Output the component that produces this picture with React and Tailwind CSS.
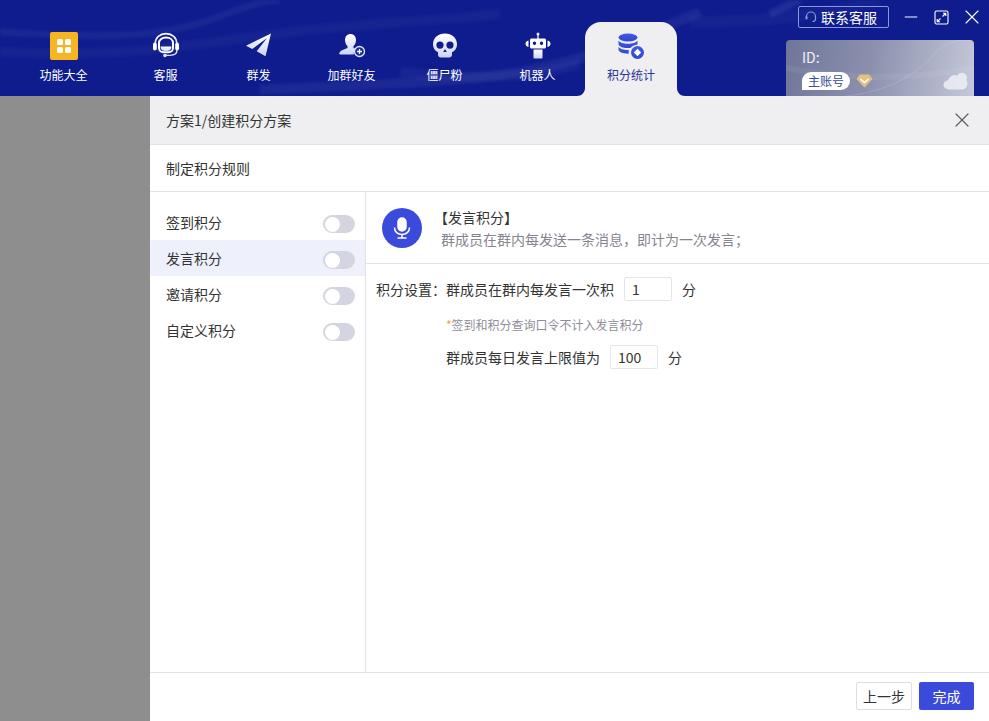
import { Minus, X } from "lucide-react";

const FONT = "font-['Noto_Sans_CJK_SC','Noto_Sans',sans-serif]";

function IconDefs() {
  return (
    <svg className="absolute h-0 w-0">
      <defs>
        <linearGradient id="navWhite" x1="0" y1="0" x2="0" y2="1">
          <stop offset="0" stopColor="#ffffff" />
          <stop offset="1" stopColor="#ccd4fb" />
        </linearGradient>
        <linearGradient id="navBlue" x1="0" y1="0" x2="0" y2="1">
          <stop offset="0" stopColor="#4258e6" />
          <stop offset="1" stopColor="#3345d4" />
        </linearGradient>
      </defs>
    </svg>
  );
}

const GridIcon = () => (
  <div className="grid h-7 w-7 grid-cols-2 content-center justify-center gap-[2px] rounded-[2px] bg-[#f7b51f] px-[7px]">
    <span className="h-[6px] w-[6px] rounded-[1.5px] bg-white" />
    <span className="h-[6px] w-[6px] rounded-[1.5px] bg-white" />
    <span className="h-[6px] w-[6px] rounded-[1.5px] bg-white" />
    <span className="h-[6px] w-[6px] rounded-[1.5px] bg-white" />
  </div>
);

const HeadsetIcon = () => (
  <svg width="28" height="28" viewBox="0 0 28 28">
    <path d="M3.2 14V11.5C3.2 5.5 8 1.6 14 1.6s10.800 3.900 10.800 9.900V14" fill="none" stroke="url(#navWhite)" strokeWidth="1.6" />
    <path d="M7 11c0-3 2.600-5.400 7-5.400s7 2.400 7 5.400v5c0 2.400-2 4.200-4.500 4.200h-5C9 20.200 7 18.400 7 16z" fill="none" stroke="#fff" strokeWidth="2" />
    <path d="M8.500 14.500h11c0 3-2 4.500-4.500 4.500h-2c-2.500 0-4.500-1.500-4.500-4.500z" fill="url(#navWhite)" />
    <rect x="1" y="10.500" width="3.800" height="8" rx="1.900" fill="#fff" />
    <rect x="23.200" y="10.500" width="3.800" height="8" rx="1.900" fill="#fff" />
    <path d="M25 18c0 3.500-3 5.300-7 5.300h-4" fill="none" stroke="#dfe4fd" strokeWidth="1.300" />
    <circle cx="13" cy="23.500" r="1.800" fill="#dfe4fd" />
  </svg>
);

const PlaneIcon = () => (
  <svg width="28" height="28" viewBox="0 0 28 28">
    <path d="M26 1.500 1 13.700l6.300 3.300L22 6 11.700 19.300l8.800 5z" fill="url(#navWhite)" />
  </svg>
);

const AddFriendIcon = () => (
  <svg width="28" height="28" viewBox="0 0 28 28">
    <path d="M12.500 2c3.400 0 5.500 2.600 5.500 6 0 2.500-1 4.800-2.500 6v2c1 .4 1.800.8 2.500 1.100-1.600 1.300-2.300 3-2.300 5.400H2.500c-1 0-1.500-.6-1.200-1.500.6-2 4-3.500 8.200-5v-2C8 12.800 7 10.500 7 8c0-3.400 2.100-6 5.500-6z" fill="url(#navWhite)" />
    <circle cx="21.500" cy="19.500" r="5" fill="#1a2a94" stroke="#e3e7fd" strokeWidth="1.300" />
    <path d="M19 19.500h5M21.500 17v5" stroke="#fff" strokeWidth="1.300" />
  </svg>
);

const SkullIcon = () => (
  <svg width="28" height="28" viewBox="0 0 28 28">
    <path fillRule="evenodd" d="M14 1.500c6.900 0 12 4.500 12 10.700 0 3.800-2 6.600-5 8.100v2.200c0 2-1.300 3-3 3h-8c-1.700 0-3-1-3-3v-2.200c-3-1.500-5-4.300-5-8.100C2 6 7.100 1.500 14 1.500zM9 9.500a3.600 3.600 0 1 0 0 7.200 3.600 3.600 0 0 0 0-7.200zm10 0a3.600 3.600 0 1 0 0 7.200 3.600 3.600 0 0 0 0-7.200zM14 17l-1.800 3h3.600z" fill="url(#navWhite)" />
  </svg>
);

const RobotIcon = () => (
  <svg width="28" height="28" viewBox="0 0 28 28">
    <circle cx="14" cy="2" r="1.500" fill="#dfe4fd" />
    <rect x="13.400" y="2" width="1.200" height="5" fill="#fff" />
    <path fillRule="evenodd" d="M7.500 6.500h13c.8 0 1.500.7 1.500 1.500v7c0 .8-.7 1.500-1.500 1.500h-13C6.700 16.500 6 15.800 6 15V8c0-.8.700-1.500 1.500-1.500zM10.500 9.500a1.700 1.700 0 1 0 0 3.400 1.700 1.700 0 0 0 0-3.400zm7 0a1.700 1.700 0 1 0 0 3.400 1.700 1.700 0 0 0 0-3.400z" fill="#fff" />
    <path d="M9.500 17.500h9v8c0 .6-.4 1-1 1h-7c-.6 0-1-.4-1-1z" fill="url(#navWhite)" />
    <path d="M4.500 8.500v6.500C2.500 14.500 1.500 13.200 1.500 11.700S2.500 9 4.500 8.500zM23.500 8.500v6.500c2-.5 3-1.800 3-3.300s-1-2.700-3-3.200z" fill="#fff" />
  </svg>
);

const CoinsIcon = () => (
  <svg width="28" height="28" viewBox="0 0 28 28">
    <ellipse cx="11" cy="5.500" rx="9.500" ry="4" fill="url(#navBlue)" />
    <path d="M1.500 8.500c1.200 2 5 3.300 9.500 3.300s8.300-1.300 9.500-3.300v3.200c0 .4-.1.700-.3 1-2.700.1-5.300 1.300-6.800 3.200-.8.100-1.600.2-2.400.2-5.200 0-9.500-1.900-9.500-4.200z" fill="url(#navBlue)" />
    <path d="M1.500 14.800c1.200 2 5 3.300 9.500 3.300h1c-.3.900-.4 1.800-.4 2.700v1c-.2 0-.4 0-.6 0-5.200 0-9.500-1.900-9.500-4.200z" fill="url(#navBlue)" />
    <circle cx="20.500" cy="20.500" r="6.500" fill="url(#navBlue)" />
    <path d="M20.500 16.800l3.700 3.700-3.700 3.700-3.700-3.700z" fill="#fff" />
  </svg>
);

const tabs = [
  { label: "功能大全", icon: GridIcon },
  { label: "客服", icon: HeadsetIcon },
  { label: "群发", icon: PlaneIcon },
  { label: "加群好友", icon: AddFriendIcon },
  { label: "僵尸粉", icon: SkullIcon },
  { label: "机器人", icon: RobotIcon },
];

const rules = ["签到积分", "发言积分", "邀请积分", "自定义积分"];

function HeaderWaves() {
  return (
    <svg className="pointer-events-none absolute inset-0 h-full w-full blur-[1.5px]" viewBox="0 0 989 96" fill="none" preserveAspectRatio="none">
      <path d="M0 32c110 6 160 6 215-14 45-16 50-18 65-18" stroke="#fff" strokeOpacity=".05" strokeWidth="7" />
      <path d="M0 52c130 6 195-8 290-20 90-10 130-10 210-18" stroke="#fff" strokeOpacity=".035" strokeWidth="10" />
      <path d="M260 90c60-4 190-6 260-18 60-10 110-30 180-60" stroke="#fff" strokeOpacity=".06" strokeWidth="10" />
      <path d="M400 72c60 6 130 8 180-8" stroke="#fff" strokeOpacity=".04" strokeWidth="10" />
      <path d="M690 22c60 0 120-4 190-22" stroke="#fff" strokeOpacity=".03" strokeWidth="12" />
      <path d="M770 14 800 0" stroke="#fff" strokeOpacity=".08" strokeWidth="8" />
    </svg>
  );
}

function NavTab({ label, icon: Icon, className = "" }) {
  return (
    <div className={`flex w-[93px] flex-col items-center pt-8 ${className}`}>
      <div className="flex h-7 w-7 items-center justify-center">
        <Icon />
      </div>
      <span className="mt-[6px] text-xs leading-[18px] text-white">{label}</span>
    </div>
  );
}

function ActiveTab() {
  return (
    <div className="relative ml-[1px] mt-[22px] flex w-[92px] flex-col items-center rounded-t-[16px] bg-[#efeff2] pt-[10px]">
      <svg className="absolute bottom-0 left-[-8px]" width="8" height="8" viewBox="0 0 8 8">
        <path d="M8 0v8H0c4.500 0 8-3.500 8-8z" fill="#efeff2" />
      </svg>
      <svg className="absolute bottom-0 right-[-8px]" width="8" height="8" viewBox="0 0 8 8">
        <path d="M0 0v8h8C3.500 8 0 4.500 0 0z" fill="#efeff2" />
      </svg>
      <CoinsIcon />
      <span className="mt-[6px] text-xs leading-[18px] text-[#2a3596]">积分统计</span>
    </div>
  );
}

function AccountCard() {
  return (
    <div className="relative mt-3 h-14 w-[188px] overflow-hidden rounded-t-[4px] bg-[linear-gradient(100deg,#6f7699_0%,#8b90ad_45%,#c6c9da_100%)] pl-4 pt-[7px]">
      <svg className="absolute inset-0 h-full w-full" viewBox="0 0 188 56" fill="none">
        <path d="M60 56c40-4 70-20 90-44 12-12 24-12 38-12" stroke="#fff" strokeOpacity=".15" />
        <path d="M0 28c60 10 110 14 188 0" stroke="#fff" strokeOpacity=".06" strokeWidth="6" />
      </svg>
      <div className="relative text-sm leading-5 text-white/90">ID:</div>
      <div className="relative mt-[5px] flex items-center">
        <span className="flex h-[18px] w-12 items-center justify-center rounded-[9px] rounded-bl-none bg-white text-xs text-[#3c4a9c]">主账号</span>
        <svg className="ml-[6px]" width="17" height="14" viewBox="0 0 17 14">
          <path d="M4 .500h9L16.500 5 8.500 13.500.500 5z" fill="#e6c080" />
          <path d="M4.500 5 8.500 8.500 12.500 5" fill="none" stroke="#fff" strokeWidth="1.600" />
        </svg>
      </div>
      <svg className="absolute bottom-[6px] right-[6px]" width="25" height="18" viewBox="0 0 25 18">
        <path d="M6 17.500c-3 0-5.500-2-5.500-4.700 0-2.500 2-4.400 4.500-4.600C6 5 8.500 3 11.500 3c1 0 2 .2 2.800.7C15.200 1.800 17 .800 19 .800c2.800 0 5 2.300 5 4.800 0 1-.3 1.700-.7 2.400.7.900 1.200 2 1.200 3.200 0 3.300-2.500 6.300-5.500 6.300z" fill="#fff" fillOpacity=".65" />
      </svg>
    </div>
  );
}

function TopBar() {
  return (
    <header className="relative flex h-24 shrink-0 bg-[#0e1c8e]">
      <HeaderWaves />
      <nav className="relative ml-[17px] flex">
        <NavTab {...tabs[0]} className="mr-[9px]" />
        {tabs.slice(1).map((tab) => (
          <NavTab key={tab.label} {...tab} />
        ))}
        <ActiveTab />
      </nav>
      <div className="relative ml-auto mr-[15px] flex w-[188px] flex-col items-end pt-[6px]">
        <div className="mr-[-10px] flex h-[22px] items-center">
          <div className="flex h-[22px] w-[91px] items-center rounded-[2px] border border-[#8d97d8] pl-[6px] text-sm leading-none text-white">
            <svg width="12" height="12" viewBox="0 0 12 12" fill="none" className="mr-[4px]">
              <path d="M1.500 8V5.500a4.500 4.500 0 0 1 9 0V8c0 1.500-1.500 2.500-3 2.500" stroke="#8d97d8" strokeWidth="1.200" />
              <rect x=".500" y="5" width="2" height="3.500" rx="1" fill="#8d97d8" />
            </svg>
            联系客服
          </div>
          <Minus className="ml-3 h-5 w-5 text-white" strokeWidth={1.2} />
          <svg className="ml-[13px]" width="15" height="15" viewBox="0 0 15 15" fill="none" stroke="#fff" strokeWidth="1.100">
            <rect x="1" y="1" width="13" height="13" rx="1.500" />
            <path d="M8.500 6.500 11.500 3.500M9 3.200h2.800V6M6.500 8.500 3.500 11.500M3.200 9v2.800H6" />
          </svg>
          <X className="ml-[11px] h-6 w-6 text-white" strokeWidth={1.1} />
        </div>
        <AccountCard />
      </div>
    </header>
  );
}

function Toggle() {
  return (
    <div className="mt-1 flex h-[18px] w-8 items-center rounded-full bg-[#d5d5e1] pl-[2px]">
      <span className="h-[15px] w-[15px] rounded-full bg-white" />
    </div>
  );
}

function RuleList() {
  return (
    <aside className="w-[216px] shrink-0 border-r border-[#e2e2e6] pt-3">
      {rules.map((rule) => (
        <div
          key={rule}
          className={`flex h-9 items-center justify-between pl-4 pr-[10px] text-sm text-[#333] ${
            rule === "发言积分" ? "rounded-l-[2px] bg-[#eef0fb]" : ""
          }`}
        >
          {rule}
          <Toggle />
        </div>
      ))}
    </aside>
  );
}

function ScoreInput({ value }) {
  return (
    <div className="flex h-6 w-12 items-center rounded-[2px] border border-[#e6e6ea] pl-[7px] text-sm text-[#333]">
      {value}
    </div>
  );
}

function SpeakPanel() {
  return (
    <main className="min-w-0 flex-1">
      <div className="flex h-[72px] items-start border-b border-[#e2e2e6] pl-4 pt-4">
        <div className="flex h-10 w-10 items-center justify-center rounded-full bg-[#3a4bdc]">
          <svg width="20" height="24" viewBox="0 0 20 24" fill="none" stroke="#fff" strokeWidth="1.500">
            <rect x="6" y="2" width="8" height="13" rx="4" fill="#fff" />
            <path d="M2.500 11.500c0 4.300 3.300 7 7.500 7s7.500-2.700 7.500-7M10 18.500V22M5.500 22h9" />
          </svg>
        </div>
        <div className="ml-[12px] mt-[-2px]">
          <div className="h-[22px] text-sm leading-[22px] text-[#333]">【发言积分】</div>
          <div className="ml-[7px] text-sm leading-[22px] text-[#85858f]">群成员在群内每发送一条消息，即计为一次发言；</div>
        </div>
      </div>
      <div className="pl-[10px] pt-[13px] text-sm text-[#333]">
        <div className="flex h-6 items-center">
          <span className="w-[70px]">积分设置：</span>
          <span>群成员在群内每发言一次积</span>
          <div className="ml-[10px]">
            <ScoreInput value="1" />
          </div>
          <span className="ml-[10px]">分</span>
        </div>
        <div className="ml-[70px] mt-[15px] text-xs leading-[18px] text-[#8e8e98]">
          <span className="text-[#f0a050]">*</span>签到和积分查询口令不计入发言积分
        </div>
        <div className="ml-[70px] mt-[11px] flex h-6 items-center">
          <span>群成员每日发言上限值为</span>
          <div className="ml-[10px]">
            <ScoreInput value="100" />
          </div>
          <span className="ml-[10px]">分</span>
        </div>
      </div>
    </main>
  );
}

export default function App() {
  return (
    <div className={`relative flex h-screen w-full flex-col overflow-hidden bg-[#8e8e8e] ${FONT}`}>
      <IconDefs />
      <TopBar />
      <div className="ml-[150px] flex min-h-0 flex-1 flex-col bg-white">
        <div className="flex h-[49px] shrink-0 items-center justify-between border-b border-[#e2e2e6] bg-[#efeff2] pl-4 pr-[15px] text-sm text-[#333]">
          方案1/创建积分方案
          <X className="h-6 w-6 text-[#5f6068]" strokeWidth={1.2} />
        </div>
        <div className="flex h-[47px] shrink-0 items-center border-b border-[#e2e2e6] pl-4 text-sm text-[#333]">
          制定积分规则
        </div>
        <div className="flex min-h-0 flex-1">
          <RuleList />
          <SpeakPanel />
        </div>
        <footer className="flex h-[49px] shrink-0 items-start justify-end gap-[7px] border-t border-[#e2e2e6] pr-[15px] pt-[9px]">
          <button className="h-7 w-14 rounded-[2px] border border-[#dcdce2] bg-white text-sm text-[#333]">上一步</button>
          <button className="h-7 w-[55px] rounded-[2px] bg-[#3a4bdc] text-sm text-white">完成</button>
        </footer>
      </div>
    </div>
  );
}
